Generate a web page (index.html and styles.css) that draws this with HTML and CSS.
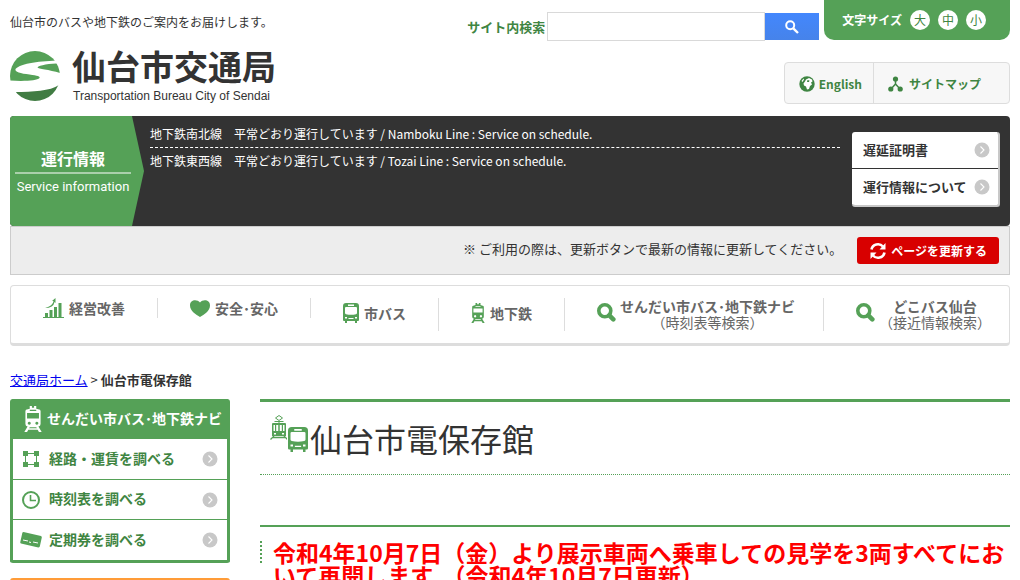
FILE: index.html
```html
<!DOCTYPE html>
<html lang="ja">
<head>
<meta charset="utf-8">
<title>仙台市電保存館｜仙台市交通局</title>
<link rel="stylesheet" href="styles.css">
</head>
<body>
<svg class="defs" width="0" height="0" aria-hidden="true">
  <symbol id="arrow" viewBox="0 0 16 16"><circle cx="8" cy="8" r="7.5" fill="#c8c8c8"/><path d="M6.5 4.5 10 8l-3.5 3.5" fill="none" stroke="#fff" stroke-width="1.1"/></symbol>
  <symbol id="search" viewBox="0 0 19 19"><circle cx="7.8" cy="7.8" r="6" fill="none" stroke="currentColor" stroke-width="3.6"/><path d="m12.3 12.3 4 4" stroke="currentColor" stroke-width="4.6" stroke-linecap="round"/></symbol>
  <symbol id="bus" viewBox="0 0 16 20"><path fill="currentColor" fill-rule="evenodd" d="M3 0h10q3 0 3 3v14q0 1-1 1h-1v2h-2v-2H4v2H2v-2H1q-1 0-1-1V3q0-3 3-3zM5 1.500v1.500h6V1.500zM2 5v5q0 1 1 1.200 5 1 10 0 1-.2 1-1.200V5q0-1-1-1H3q-1 0-1 1zM2 14v1.500h2V14zM12 14v1.500h2V14zM5.500 15v1h5v-1z"/></symbol>
  <symbol id="train" viewBox="0 0 16 24"><path fill="currentColor" fill-rule="evenodd" d="M5 0h2v1.500h2V0h2v2.500l3.500 1 .5 1v12q0 2-2 2.500l3 5h-2.500l-1.200-2H3.700l-1.200 2H0l3-5q-2-.5-2-2.500v-12l.5-1L5 2.500zM5 3.500v1h6v-1zM2.500 6.500v5h11v-5zM4.500 14.500a1.400 1.400 0 1 0 .1 0zM11.500 14.500a1.400 1.400 0 1 0 .1 0zM5 19.500l-.6 1h7.200l-.6-1z"/></symbol>
</svg>

<header class="header">
  <div class="brand">
    <p class="tagline">仙台市のバスや地下鉄のご案内をお届けします。</p>
    <a class="logo" href="#">
      <svg class="logo-mark" viewBox="0 0 50 50" aria-hidden="true">
        <defs><clipPath id="disc"><circle cx="25" cy="25" r="25"/></clipPath></defs>
        <g clip-path="url(#disc)">
          <path fill="#55a157" d="M0 0h50v9.500C31 10 11 12 5.500 18c-1 3 5 4.500 14 5.500 8 1 11 2 10 3.500C27 29.500 15 30.500 0 29.500z"/>
          <path fill="#55a157" d="M50 12.500C40 12.500 29 14 27.500 16.500 28 18 39 18.500 50 22z"/>
          <path fill="#417c43" d="M5 41c18 0 35-1 44-7v16H5z"/>
        </g>
      </svg>
      <span class="logo-text">
        <span class="logo-name">仙台市交通局</span>
        <span class="logo-sub">Transportation Bureau City of Sendai</span>
      </span>
    </a>
  </div>
  <div class="tools">
    <div class="tools-row">
      <form class="search">
        <label for="q">サイト内検索</label>
        <input id="q" type="text">
        <button type="button" aria-label="検索"><svg width="14" height="14" viewBox="0 0 14 14"><circle cx="5.200" cy="5.200" r="4" fill="none" stroke="#fff" stroke-width="2"/><path d="m8.300 8.300 4.700 4.700" stroke="#fff" stroke-width="2.400"/></svg></button>
      </form>
      <div class="textsize">
        <span>文字サイズ</span>
        <button type="button">大</button>
        <button type="button">中</button>
        <button type="button">小</button>
      </div>
    </div>
    <nav class="sublinks">
      <a class="english" href="#"><svg width="16" height="16" viewBox="0 0 16 16"><circle cx="8" cy="8" r="7.700" fill="#3f8542"/><path fill="#fff" d="M7 3.500 10 2l3 1.500.5 2-1.500 1 1 2-2 1.500-1 3-2 .5-1-3-2-1-.5-2 1.500-2zM2.500 5l2-2.500.5 1L3.500 6z"/><path fill="#3f8542" d="m8.500 4 2 .5-.5 1.500H8z"/></svg>English</a>
      <a class="sitemap" href="#"><svg width="15" height="16" viewBox="0 0 15 16"><path d="M7.500 3v6M7.500 8 3 13M7.500 8l4.500 5" fill="none" stroke="#3f8542" stroke-width="1.500"/><g fill="#3f8542"><circle cx="7.500" cy="3" r="2.600"/><circle cx="2.800" cy="13" r="2.600"/><circle cx="12.200" cy="13" r="2.600"/></g></svg>サイトマップ</a>
    </nav>
  </div>
</header>

<section class="service">
  <h2 class="service-title"><span class="service-ja">運行情報</span><span class="service-en">Service information</span></h2>
  <ul class="service-list">
    <li>地下鉄南北線　平常どおり運行しています / Namboku Line : Service on schedule.</li>
    <li>地下鉄東西線　平常どおり運行しています / Tozai Line : Service on schedule.</li>
  </ul>
  <div class="service-links">
    <a href="#">遅延証明書<svg class="arrow"><use href="#arrow"/></svg></a>
    <a href="#">運行情報について<svg class="arrow"><use href="#arrow"/></svg></a>
  </div>
</section>
<div class="notice">
  <p>※ ご利用の際は、更新ボタンで最新の情報に更新してください。</p>
  <button type="button"><svg width="16" height="18" viewBox="0 0 16 18"><g fill="none" stroke="#fff" stroke-width="2.600"><path d="M1.500 7.500C2.500 2 9.500.5 13 4.500"/><path d="M14.500 10.500C13.500 16 6.500 17.500 3 13.500"/></g><path fill="#fff" d="M15.500 1v6.500H9.500zM.5 17v-6.500h6z"/></svg>ページを更新する</button>
</div>

<nav class="gnav">
  <a class="short" href="#"><svg width="21" height="20" viewBox="0 0 21 20"><path fill="#55a157" d="M0 19h21v1H0zM2 15h3v4H2zM6.500 12h3v7h-3zM11 9h3v10h-3zM15.500 5h3v14h-3zM2 10q8-2 8.500-7L9 3l3.500-3v5l-1-1Q10.500 10 2 10z"/></svg>経営改善</a>
  <a class="short" href="#"><svg width="20" height="17" viewBox="0 0 20 17"><path fill="#55a157" d="M10 2.500C13-1 20-.5 20 5.500 20 11 14 14.500 10 17 6 14.500 0 11 0 5.500 0-.5 7-1 10 2.500z"/></svg>安全･安心</a>
  <a class="one" href="#"><svg width="16" height="20"><use href="#bus"/></svg><span>市バス</span></a>
  <a class="one" href="#"><svg width="14" height="20"><use href="#train"/></svg><span>地下鉄</span></a>
  <a class="two" href="#"><svg width="19" height="19"><use href="#search"/></svg><span>せんだい市バス･地下鉄ナビ<small>（時刻表等検索）</small></span></a>
  <a class="two" href="#"><svg width="19" height="19"><use href="#search"/></svg><span>どこバス仙台<small>（接近情報検索）</small></span></a>
</nav>

<p class="crumbs"><a href="#">交通局ホーム</a> &gt; <strong>仙台市電保存館</strong></p>

<div class="columns">
  <aside class="side">
    <nav class="navi">
      <h2><svg width="18" height="26"><use href="#train"/></svg><span>せんだい市バス･地下鉄ナビ</span></h2>
      <a href="#"><svg class="icon" viewBox="0 0 22 18"><path d="M5.500 3.500h11v11h-11z" fill="none" stroke="#55a157"/><path fill="#55a157" d="M3 1h5v5H3zM14 1h5v5h-5zM3 12h5v5H3zM14 12h5v5h-5z"/></svg><span>経路・運賃を調べる</span><svg class="arrow"><use href="#arrow"/></svg></a>
      <a href="#"><svg class="icon" viewBox="0 0 22 18"><circle cx="11" cy="9" r="8" fill="none" stroke="#55a157" stroke-width="2"/><path d="M10.500 4v5.500H16" fill="none" stroke="#55a157" stroke-width="1.600"/></svg><span>時刻表を調べる</span><svg class="arrow"><use href="#arrow"/></svg></a>
      <a href="#"><svg class="icon" viewBox="0 0 22 18"><path fill="#55a157" d="M3.500 1 21 5q1 .5.800 1.500l-2 9q-.5 1-1.500 1L1 12.500Q0 12 .300 11l2-9q.2-1 1.200-1z"/><path stroke="#fff" d="m3 9 5 1M9 11l2 .5M13 11l5 1" fill="none"/></svg><span>定期券を調べる</span><svg class="arrow"><use href="#arrow"/></svg></a>
    </nav>
    <div class="orange"></div>
  </aside>
  <main class="main">
    <h1><svg width="39" height="38" viewBox="0 0 39 38"><path fill="none" stroke="#55a157" d="M9 5.500 5.500 3 9 .500 12.500 3zM4.500 6.500h9M9 6v10M5.500 8.500h7"/><path fill="#55a157" fill-rule="evenodd" d="M3 8h12q1 0 1 1v12H2V9q0-1 1-1zM3.500 10v6H5v-6zM6.200 10v6h2.300v-6zM9.500 10v6h2.300v-6zM13 10v6h1.500v-6zM4 18v1.500h2V18zM12 18v1.500h2V18z"/><path d="M4 21 .500 24.500M14 21l3.500 3.500M3 22.500h12" fill="none" stroke="#55a157" stroke-width="1.300"/><rect x="17" y="11" width="22" height="26" rx="4" fill="#fff"/><svg x="18" y="12" width="20" height="25" viewBox="0 0 16 20" color="#55a157"><use href="#bus" width="16" height="20"/></svg></svg>仙台市電保存館</h1>
    <section class="news">
      <h2>令和4年10月7日（金）より展示車両へ乗車しての見学を3両すべてにおいて再開します。（令和4年10月7日更新）</h2>
    </section>
  </main>
</div>
</body>
</html>
```
FILE: styles.css
```css
* { box-sizing: border-box; }
html { overflow: hidden; height: 100%; }
body {
  margin: 0;
  padding: 0 10px;
  height: 100%;
  overflow: hidden;
  color: #333;
  background: #fff;
  font: 13px/20px "Noto Sans CJK JP", sans-serif;
}
h1, h2, p, ul { margin: 0; padding: 0; }
svg { flex: none; display: block; }
.defs { position: absolute; }
button { font-family: inherit; border: 0; padding: 0; cursor: pointer; }
a { text-decoration: none; color: inherit; }
.arrow { width: 16px; height: 16px; margin-left: auto; }

.header { display: flex; justify-content: space-between; padding-bottom: 11px; }
.tagline { padding-top: 12px; font-size: 12px; }
.logo { display: flex; align-items: flex-start; gap: 12px; margin-top: 13px; }
.logo-mark { width: 50px; height: 50px; margin-top: 6px; }
.logo-text { display: flex; flex-direction: column; }
.logo-name { font-size: 34px; line-height: 42px; font-weight: 700; }
.logo-sub { padding: 1px 0 0 1px; font: 12px/17px "Liberation Sans", Arial, sans-serif; }
.tools { display: flex; flex-direction: column; align-items: flex-end; gap: 21px; }
.tools-row { display: flex; gap: 5px; align-items: flex-start; }
.search { display: flex; align-items: center; padding-top: 12px; }
.search label { color: #3f8542; font-weight: 700; margin-right: 2px; }
.search input { width: 218px; height: 29px; border: 1px solid #d9d9d9; padding: 0 6px; font: inherit; }
.search button {
  width: 54px;
  height: 27px;
  display: flex;
  align-items: center;
  justify-content: center;
  background: linear-gradient(#4387fd, #4683ea);
}
.textsize {
  display: flex;
  align-items: center;
  gap: 8px;
  height: 40px;
  padding: 0 24px 0 18px;
  background: #55a157;
  border-radius: 0 0 10px 10px;
  color: #fff;
  font-size: 12px;
  font-weight: 700;
}
.textsize button { width: 20px; height: 20px; border-radius: 50%; background: #fff; color: #3f8542; font-size: 12px; line-height: 20px; }
.sublinks {
  display: flex;
  border: 1px solid #ddd;
  border-radius: 4px;
  background: #f7f7f7;
  color: #3f8542;
  font-size: 12px;
  font-weight: 700;
}
.sublinks a { display: flex; align-items: center; gap: 5px; height: 40px; padding: 2px 14px 0; }
.sublinks .english { border-right: 1px solid #ddd; padding-right: 11px; gap: 4px; }
.sublinks .sitemap { padding-right: 28px; gap: 6px; }

.service { display: flex; min-height: 110px; background: #333; border-radius: 4px; overflow: hidden; color: #fff; }
.service-title {
  width: 134px;
  padding: 31px 13px 0 5px;
  background: #55a157;
  clip-path: polygon(0 0, 122px 0, 100% 50%, 122px 100%, 0 100%);
  text-align: center;
  display: flex;
  flex-direction: column;
}
.service-ja { font-size: 16px; line-height: 23px; padding-bottom: 2px; border-bottom: 2px solid #aad0ab; }
.service-en { font: 13px/26px Roboto, sans-serif; white-space: nowrap; }
.service-list { flex: 1; list-style: none; margin: 5px 12px 0 6px; font-size: 12px; line-height: 26px; }
.service-list li + li { border-top: 1px dashed #fff; }
.service-links {
  width: 148px;
  margin: 16px 10px 19px 0;
  border: solid #c8c8c8;
  border-width: 0 2px 2px 0;
  border-radius: 3px;
  overflow: hidden;
  color: #333;
  font-weight: 700;
}
.service-links a { display: flex; align-items: center; height: 36px; padding: 0 8px 0 11px; background: #fff; }
.service-links a + a { margin-top: 1px; }

.notice {
  display: flex;
  align-items: center;
  justify-content: flex-end;
  gap: 15px;
  height: 49px;
  padding-right: 10px;
  border: 1px solid #ccc;
  background: #ededed;
}
.notice p { padding-bottom: 3px; }
.notice button {
  display: flex;
  align-items: center;
  gap: 5px;
  height: 27px;
  padding: 0 12px 0 13px;
  border-radius: 3px;
  background: #d80000;
  color: #fff;
  font-size: 12px;
  font-weight: 700;
}

.gnav {
  display: flex;
  align-items: flex-start;
  height: 61px;
  margin-top: 10px;
  padding-top: 12px;
  border: 1px solid #ddd;
  border-bottom-width: 3px;
  border-radius: 4px;
  color: #666;
  font-size: 14px;
  line-height: 16px;
  font-weight: 700;
  white-space: nowrap;
}
.gnav a { display: flex; align-items: center; gap: 5px; height: 33px; padding: 0 32px; border-right: 1px solid #ddd; }
.gnav a:last-child { border-right: 0; padding-right: 0; }
.gnav .short { height: 20px; }
.gnav svg { color: #55a157; }
.gnav .one { padding-bottom: 3px; }
.gnav .two { text-align: center; padding-right: 28px; gap: 4px; align-items: flex-start; }
.gnav .two svg { margin-top: 5px; }
.gnav small { display: block; font-size: 14px; font-weight: 400; }

.crumbs { margin: 24px 0 9px; }
.crumbs a { color: #00e; text-decoration: underline; }

.columns { display: flex; gap: 30px; }
.side { width: 220px; flex: none; }
.navi { border: 3px solid #55a157; border-top: 0; border-radius: 3px; background: #55a157; font-size: 14px; font-weight: 700; }
.navi h2 { display: flex; align-items: center; gap: 5px; height: 40px; padding-left: 11px; color: #fff; font-size: 14px; white-space: nowrap; }
.navi a { display: flex; align-items: center; gap: 7px; height: 40px; padding: 0 9px 0 7px; background: #fff; color: #3f8542; }
.navi a + a { border-top: 1px solid #55a157; }
.navi span { padding-bottom: 3px; }
.navi a:last-child { height: 41px; }
.icon { width: 22px; height: 18px; }
.orange { height: 40px; margin-top: 15px; border-radius: 3px; background: #ff9c38; }
.main { flex: 1; min-width: 0; }
.main h1 {
  display: flex;
  align-items: flex-start;
  gap: 1px;
  padding: 13px 10px;
  border-top: 3px solid #55a157;
  border-bottom: 1px dotted #55a157;
  font-size: 32px;
  line-height: 46px;
  font-weight: 400;
}
.news { margin-top: 50px; padding-top: 14px; border-top: 2px solid #55a157; }
.news h2 { display: flex; gap: 11px; color: #f00; font-size: 23px; line-height: 23px; }
.news h2::before { content: ""; flex: none; height: 22px; border-left: 2px dotted #55a157; }
```
